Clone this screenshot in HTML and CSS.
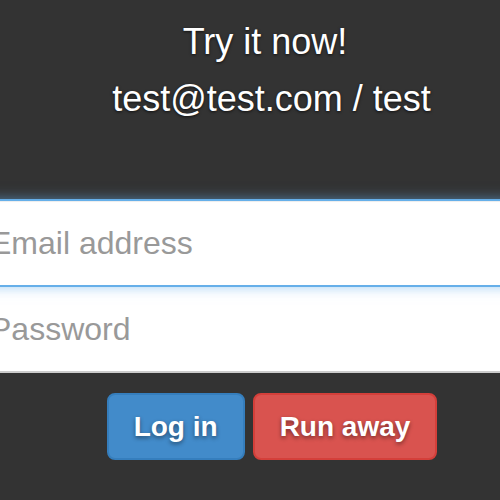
FILE: index.html
```html
<!DOCTYPE html>
<html>
<head>
<meta charset="utf-8">
<link rel="stylesheet" href="styles.css">
</head>
<body>
<div class="page">
  <div class="intro">
    <div class="line line-one">Try it now!</div>
    <div class="line line-two">test@test.com / test</div>
  </div>
  <form class="signin">
    <div class="field field-email">Email address</div>
    <div class="field field-password">Password</div>
    <div class="actions">
      <button type="button" class="btn btn-primary">Log in</button>
      <button type="button" class="btn btn-danger">Run away</button>
    </div>
  </form>
</div>
</body>
</html>
```
FILE: styles.css
```css
html, body {
  margin: 0;
  padding: 0;
  background: #333333;
  overflow: hidden;
}
body {
  font-family: "Liberation Sans", Arial, sans-serif;
  width: 500px;
  height: 500px;
}
.page {
  padding-top: 13px;
}
.intro {
  color: #ffffff;
  font-size: 36px;
  text-align: center;
  text-shadow: 0 1px 3px rgba(0, 0, 0, 0.7);
}
.line {
  line-height: 57px;
  white-space: nowrap;
}
.line-one {
  padding-left: 30px;
}
.line-two {
  padding-left: 43px;
}
.signin {
  margin: 72px -40px 0;
}
.field {
  box-sizing: border-box;
  height: 88px;
  line-height: 84px;
  padding: 0 28px;
  font-size: 32px;
  color: #999999;
  background: #ffffff;
  border: 2px solid #cccccc;
  white-space: nowrap;
}
.field-email {
  position: relative;
  z-index: 2;
  border-color: #66afe9;
  box-shadow: inset 0 1px 1px rgba(0, 0, 0, 0.075), 0 0 12px rgba(102, 175, 233, 0.6);
}
.field-password {
  margin-top: -2px;
}
.actions {
  display: flex;
  justify-content: center;
  gap: 8px;
  margin-top: 20px;
  padding-left: 44px;
}
.btn {
  box-sizing: border-box;
  height: 67px;
  padding: 0 25px;
  font-family: "Liberation Sans", Arial, sans-serif;
  font-size: 28px;
  font-weight: bold;
  color: #ffffff;
  border-radius: 8px;
  border: 2px solid transparent;
  text-shadow: 0 2px 4px rgba(0, 0, 0, 0.45);
  line-height: 40px;
  cursor: pointer;
}
.btn-primary {
  background: #428bca;
  border-color: #357ebd;
}
.btn-danger {
  background: #d9534f;
  border-color: #d43f3a;
}
```
